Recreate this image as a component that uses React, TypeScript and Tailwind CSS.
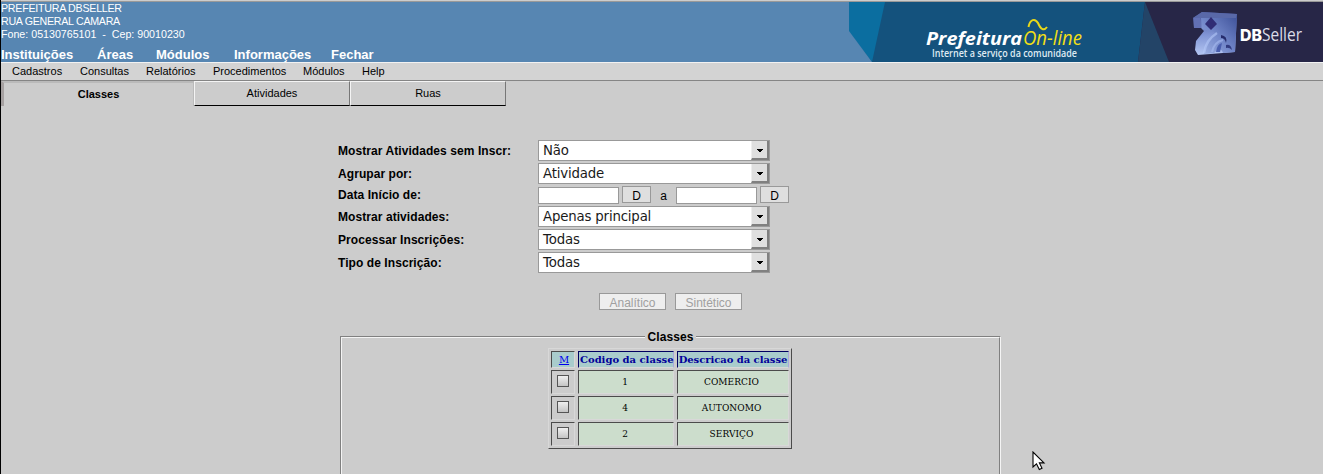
import React from "react";

const navItems = [
  { label: "Instituições", width: "w-[96px]" },
  { label: "Áreas", width: "w-[59px]" },
  { label: "Módulos", width: "w-[78px]" },
  { label: "Informações", width: "w-[97px]" },
  { label: "Fechar", width: "w-[60px]" },
];

const menuItems = [
  { label: "Cadastros", width: "w-[68px]" },
  { label: "Consultas", width: "w-[66px]" },
  { label: "Relatórios", width: "w-[67px]" },
  { label: "Procedimentos", width: "w-[90px]" },
  { label: "Módulos", width: "w-[59px]" },
  { label: "Help", width: "w-[40px]" },
];

const rows = [
  { code: "1", name: "COMERCIO" },
  { code: "4", name: "AUTONOMO" },
  { code: "2", name: "SERVIÇO" },
];

function Banner() {
  return (
    <svg width="474" height="60" viewBox="849 2 474 60" className="block shrink-0">
      <defs>
        <linearGradient id="cube" x1="0" y1="1" x2="1" y2="0">
          <stop offset="0" stopColor="#9fb2e4" />
          <stop offset="0.45" stopColor="#7388ca" />
          <stop offset="1" stopColor="#3d5098" />
        </linearGradient>
        <linearGradient id="side" x1="0" y1="0" x2="0" y2="1">
          <stop offset="0" stopColor="#4a569c" />
          <stop offset="0.55" stopColor="#8296d6" />
          <stop offset="1" stopColor="#b4c6f2" />
        </linearGradient>
      </defs>
      <rect x="849" y="2" width="474" height="60" fill="#14527d" />
      <path d="M849 2H885L872 62L849 32Z" fill="#0b6ea0" />
      <path d="M849 31L872 62H849Z" fill="#5786b2" />
      <path d="M1145 2H1323V62H1138Z" fill="#272647" />
      <path d="M1145 2L1169 62H1138Z" fill="#234467" />
      <text x="926" y="45" textLength="96" lengthAdjust="spacingAndGlyphs" fontFamily="Open Sans, sans-serif" fontSize="18.500" fontWeight="700" fontStyle="italic" fill="#fff">Prefeitura</text>
      <text x="1023" y="45" textLength="59" lengthAdjust="spacingAndGlyphs" fontFamily="Open Sans, sans-serif" fontSize="19.500" fontWeight="500" fontStyle="italic" fill="#f1df16">On-line</text>
      <path d="M1028.500 27C1030 19 1035 18 1038 23C1041 30 1044 31 1047 27" fill="none" stroke="#e9d819" strokeWidth="2" />
      <text x="932" y="57" textLength="145" lengthAdjust="spacingAndGlyphs" fontFamily="Open Sans, sans-serif" fontSize="10" fontWeight="600" fill="#dfeaf2">Internet a serviço da comunidade</text>
      <path d="M1193 18L1202 12L1237 14L1235 52L1198 55L1195 50L1196 41L1204 31L1201 28L1194 28Z" fill="url(#side)" />
      <path d="M1201 18L1237 15L1235 52L1223 53Q1221 46 1214 53L1204 54Q1205 41 1215 32L1202 29Z" fill="url(#cube)" />
      <path d="M1193 18L1202 12L1237 14L1236 18H1200Z" fill="#5968a8" />
      <path d="M1194 18H1200L1201 28H1194Z" fill="#6270b4" />
      <path d="M1211 17L1217 24L1211 30L1205 24Z" fill="#302d75" />
      <path d="M1204 53Q1206 40 1217 33" stroke="#b6cafa" strokeWidth="2.500" fill="none" opacity=".6" />
      <path d="M1212 52Q1214 42 1223 40" stroke="#a6baf0" strokeWidth="2" fill="none" opacity=".6" />
      <path d="M1221 35Q1228 36 1226 43Q1225 38 1221 38Z" fill="#262c6c" />
      <path d="M1216 52Q1217 44 1222 43L1220 52Z" fill="#4b5fae" />
      <path d="M1226 45Q1231 44 1232 50Q1229 47 1226 48Z" fill="#313b80" />
      <text x="1240" y="41" textLength="22" lengthAdjust="spacingAndGlyphs" fontFamily="Inter, sans-serif" fontSize="16.500" fontWeight="800" fill="#fff">DB</text>
      <text x="1262" y="41" textLength="40" lengthAdjust="spacingAndGlyphs" fontFamily="Open Sans, sans-serif" fontSize="17.500" fontWeight="400" fill="#dcdce8">Seller</text>
    </svg>
  );
}

function Field({ label, children, height = "h-[23px]", pad = "pt-[3px]" }: { label: string; children: React.ReactNode; height?: string; pad?: string }) {
  return (
    <div className={`flex items-start ${height}`}>
      <div className={`w-[200px] shrink-0 text-[12px] leading-[16px] font-bold tracking-[0.07px] whitespace-nowrap ${pad}`}>{label}</div>
      {children}
    </div>
  );
}

function Select({ value }: { value: string }) {
  return (
    <div className="flex h-[21px] w-[232px] justify-between border border-[#999] bg-white font-['DejaVu_Sans',sans-serif] text-[13.333px] leading-[20px] tracking-[-0.18px] text-[#1a1a1a]">
      <span className="pl-[4px]">{value}</span>
      <span className="flex h-[19px] w-[18px] items-center justify-center border-r-2 border-b-2 border-l border-[#808080] border-l-[#eee] bg-[#dfdfdf] pt-[3px]">
        <svg width="6" height="4" viewBox="0 0 6 4" shapeRendering="crispEdges">
          <path d="M0 0H6V1H5V2H4V3H2V2H1V1H0Z" fill="#000" />
        </svg>
      </span>
    </div>
  );
}

function DateInput() {
  return (
    <>
      <div className="mt-px h-[17px] w-[81px] border border-[#999] bg-white" />
      <div className="ml-[3px] h-[17px] w-[29px] border border-[#999] bg-[#dfdfdf] text-center text-[12px] leading-[18px]">D</div>
    </>
  );
}

export default function App() {
  return (
    <div className="relative flex h-[474px] w-[1323px] flex-col overflow-hidden border-l border-black bg-[#ccc] font-['Liberation_Sans',Arial,sans-serif] text-black">
      <div className="h-[2px] shrink-0 border-b border-[#999]" />
      <header className="flex h-[60px] shrink-0 justify-between bg-[#5786b2] text-white">
        <div className="whitespace-nowrap">
          <div className="h-[45px] text-[10.667px] leading-[13px]">
            <div className="tracking-[-0.25px]">PREFEITURA DBSELLER</div>
            <div className="tracking-[-0.28px]">RUA GENERAL CAMARA</div>
            <div className="whitespace-pre">Fone: 05130765101  -  Cep: 90010230</div>
          </div>
          <nav className="flex text-[13px] leading-[15px] font-bold">
            {navItems.map((n) => (
              <span key={n.label} className={n.width}>{n.label}</span>
            ))}
          </nav>
        </div>
        <Banner />
      </header>
      <nav className="flex h-[19px] shrink-0 border-t border-b border-t-[#f2f2f2] border-b-[#858585] bg-[#d3d3d3] pl-[11px] text-[11px] leading-[17px]">
        {menuItems.map((n) => (
          <span key={n.label} className={n.width}>{n.label}</span>
        ))}
      </nav>
      <div className="flex h-[25px] shrink-0 text-center text-[11px]">
        <div className="w-[193px] border-t-2 border-r border-l-[3px] border-t-[#bababa] border-r-[#bbb] border-l-[#a6a1a1] pt-px leading-[21px] font-bold">Classes</div>
        <div className="w-[156px] border border-t-[#f4f4f4] border-r-[#777] border-b-black border-l-[#f4f4f4] leading-[23px]">Atividades</div>
        <div className="w-[156px] border border-t-[#f4f4f4] border-r-[#777] border-b-black border-l-[#f4f4f4] leading-[23px]">Ruas</div>
      </div>

      <form className="mt-[34px] ml-[337px] flex flex-col">
        <Field label="Mostrar Atividades sem Inscr:"><Select value="Não" /></Field>
        <Field label="Agrupar por:"><Select value="Atividade" /></Field>
        <Field label="Data Início de:" height="h-[20px]" pad="pt-px">
          <DateInput />
          <span className="w-[25px] text-center text-[12px] leading-[20px]">a</span>
          <DateInput />
        </Field>
        <Field label="Mostrar atividades:"><Select value="Apenas principal" /></Field>
        <Field label="Processar Inscrições:"><Select value="Todas" /></Field>
        <Field label="Tipo de Inscrição:"><Select value="Todas" /></Field>
      </form>

      <div className="mt-[18px] ml-[598px] flex gap-[9px] text-center text-[12px] leading-[18px] text-[#a0a0a0]">
        <div className="h-[17px] w-[67px] border border-[#999] bg-[#eee]">Analítico</div>
        <div className="h-[17px] w-[67px] border border-[#999] bg-[#eee]">Sintético</div>
      </div>

      <section className="mt-[19px] ml-[339px] w-[661px]">
        <div className="flex h-[16px] text-[12px] leading-[16px] font-bold">
          <div className="mt-[7px] h-[9px] w-[305px] border-t border-l border-[#808080]"><div className="h-[8px] border-t border-l border-[#f4f4f4]" /></div>
          <span className="w-[51px] text-center tracking-[0.1px]">Classes</span>
          <div className="mt-[7px] h-[9px] flex-1 border-t border-r border-t-[#808080] border-r-[#f4f4f4]"><div className="h-[8px] border-t border-r border-t-[#f4f4f4] border-r-[#808080]" /></div>
        </div>
        <div className="h-[130px] border-r border-l border-r-[#f4f4f4] border-l-[#808080]">
          <div className="h-[130px] border-r border-l border-r-[#808080] border-l-[#f4f4f4] pt-[3px] pl-[206px]">
            <div className="grid w-[244px] grid-cols-[24px_96px_112px] gap-x-[3px] gap-y-[2px] border border-t-[#d8d8d8] border-r-[#4b4b4b] border-b-[#4b4b4b] border-l-[#d8d8d8] px-[2px] py-[2px] text-center font-['DejaVu_Serif',serif] text-[10px]">
              <div className="h-[17px] border border-t-[#4b4b4b] border-r-[#d8d8d8] border-b-[#d8d8d8] border-l-[#4b4b4b] bg-[#a9cccc] pl-[2px] leading-[16px] text-[#0000ee] underline">M</div>
              <div className="h-[17px] border border-t-[#000060] border-r-[#a9a9dd] border-b-[#d8d8d8] border-l-[#000060] bg-[#a9cccc] pl-px leading-[16px] font-bold whitespace-nowrap text-[#000099]">Codigo da classe</div>
              <div className="h-[17px] border border-t-[#000060] border-r-[#a9a9dd] border-b-[#d8d8d8] border-l-[#000060] bg-[#a9cccc] leading-[16px] font-bold tracking-[-0.04px] whitespace-nowrap text-[#000099]">Descricao da classe</div>
              {rows.map((r) => (
                <React.Fragment key={r.code}>
                  <div className="flex h-[24px] items-start justify-center border border-t-[#4b4b4b] border-r-[#d8d8d8] border-b-[#d8d8d8] border-l-[#4b4b4b] pt-[4px]">
                    <div className="h-[12px] w-[12px] border border-[#555] bg-linear-to-b from-[#f0f0f0] to-[#c4c4c4]" />
                  </div>
                  <div className="h-[24px] border border-t-[#4b4b4b] border-r-[#d8d8d8] border-b-[#d8d8d8] border-l-[#4b4b4b] bg-[#ccddcc] pr-[2px] text-[9px] leading-[22px]">{r.code}</div>
                  <div className="h-[24px] border border-t-[#4b4b4b] border-r-[#d8d8d8] border-b-[#d8d8d8] border-l-[#4b4b4b] bg-[#ccddcc] pr-[3px] text-[9px] leading-[22px] tracking-[0.05px]">{r.name}</div>
                </React.Fragment>
              ))}
            </div>
          </div>
        </div>
      </section>

      <svg className="absolute top-[451px] left-[1031px]" width="14" height="20" viewBox="0 0 14 20">
        <path d="M1 1V16L4.500 12.800L7.300 18.500L10 17.200L7.400 11.900H12Z" fill="#fff" stroke="#000" strokeWidth="1.100" />
      </svg>
    </div>
  );
}
